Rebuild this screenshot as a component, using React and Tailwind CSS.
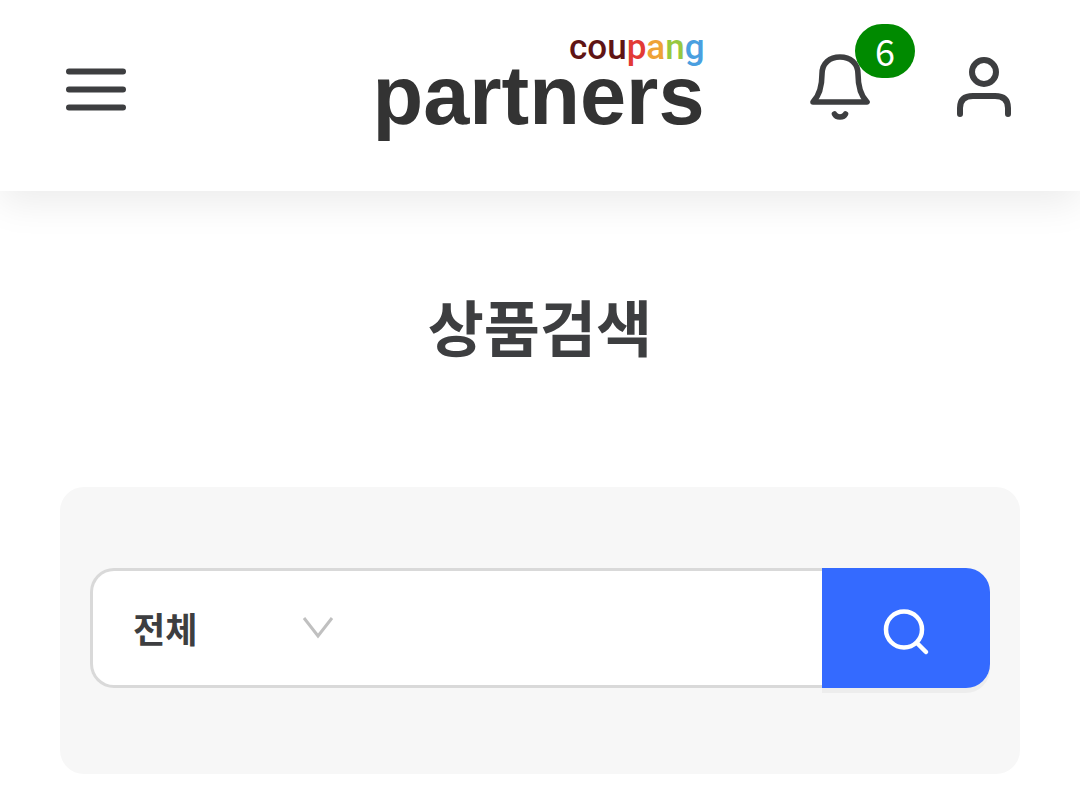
import React, { useState } from 'react';

const brand = [
  { text: 'cou', color: 'text-[#5f1414]' },
  { text: 'p', color: 'text-[#e23a36]' },
  { text: 'a', color: 'text-[#eea236]' },
  { text: 'n', color: 'text-[#97c83f]' },
  { text: 'g', color: 'text-[#4a9fe0]' },
];

function MenuIcon() {
  return (
    <svg className="w-[60px] h-11" viewBox="0 0 60 44" fill="none" stroke="currentColor" strokeWidth="6" strokeLinecap="round">
      <path d="M3 4.5h54M3 22.5h54M3 40.5h54" />
    </svg>
  );
}

function BellIcon() {
  return (
    <svg className="w-[60px] h-[68px]" viewBox="0 0 60 68" fill="none" stroke="currentColor" strokeWidth="5.6" strokeLinecap="round" strokeLinejoin="round">
      <path d="M3 49C9 43 12 35 12 21C12 10 20 4 30 4C40 4 48 10 48 21C48 35 51 43 57 49Z" />
      <path d="M24.5 61c1 2 3 3 5.500 3s4.500-1 5.500-3" />
    </svg>
  );
}

function UserIcon() {
  return (
    <svg className="w-[54px] h-[62px]" viewBox="0 0 54 62" fill="none" stroke="currentColor" strokeWidth="6" strokeLinecap="round">
      <circle cx="27" cy="16" r="12" />
      <path d="M3 58V52Q3 40 16 40H38Q51 40 51 52V58" />
    </svg>
  );
}

function SearchIcon() {
  return (
    <svg className="w-12 h-12" viewBox="0 0 48 48" fill="none" stroke="currentColor" strokeWidth="4.5" strokeLinecap="round">
      <circle cx="22" cy="21.5" r="18" />
      <path d="M35 35l9 9" />
    </svg>
  );
}

function Header() {
  return (
    <header className="grid grid-cols-[1fr_auto_1fr] items-start pl-[66px] pr-[69px] pb-[67px] bg-white shadow-[0_12px_36px_rgba(0,0,0,0.08)]">
      <button type="button" aria-label="메뉴" className="justify-self-start mt-[67px]">
        <MenuIcon />
      </button>

      <a href="#" className="flex flex-col items-end pt-7">
        <span className="font-['Roboto'] font-medium text-[35px] leading-10">
          {brand.map((part) => (
            <span key={part.text} className={part.color}>{part.text}</span>
          ))}
        </span>
        <span className="font-['Liberation_Sans'] font-bold text-[83px] leading-14 text-[#333333]">partners</span>
      </a>

      <div className="flex items-start gap-[87px] justify-self-end">
        <button type="button" aria-label="알림" className="relative mt-[53px]">
          <BellIcon />
          <span className="absolute -top-[29px] left-[45px] flex items-center justify-center w-[60px] h-[54px] pb-[2px] rounded-[27px] bg-[#008a00] text-white text-4xl">
            6
          </span>
        </button>
        <button type="button" aria-label="내 정보" className="mt-14">
          <UserIcon />
        </button>
      </div>
    </header>
  );
}

function SearchForm() {
  const [category, setCategory] = useState('all');
  const [keyword, setKeyword] = useState('');

  return (
    <form
      onSubmit={(e) => e.preventDefault()}
      className="flex h-[120px] rounded-3xl"
    >
      <div className="flex flex-1 min-w-0 rounded-l-3xl border-3 border-r-0 border-[#d9d9d9] bg-white">
        <div className="relative flex w-[250px] shrink-0">
          <select
            aria-label="카테고리"
            value={category}
            onChange={(e) => setCategory(e.target.value)}
            className="w-full appearance-none rounded-l-3xl bg-transparent pl-10 text-[35px] font-bold outline-none"
          >
            <option value="all">전체</option>
          </select>
          <svg className="pointer-events-none absolute right-[9px] top-11 w-8 h-6 text-[#c0c0c0]" viewBox="0 0 32 24" fill="none" stroke="currentColor" strokeWidth="3">
            <path d="M2 3L16 21L30 3" />
          </svg>
        </div>
        <input
          type="text"
          aria-label="검색어"
          value={keyword}
          onChange={(e) => setKeyword(e.target.value)}
          className="flex-1 min-w-0 bg-transparent px-4 text-[35px] outline-none"
        />
      </div>
      <button
        type="submit"
        aria-label="검색"
        className="flex items-center justify-center w-[168px] pt-2 rounded-r-3xl bg-[#346aff] text-white shadow-[0_5px_0_rgba(0,0,0,0.04)]"
      >
        <SearchIcon />
      </button>
    </form>
  );
}

export default function App() {
  return (
    <div className="min-h-screen bg-white text-[#3d3e40] font-['Noto_Sans_CJK_KR',sans-serif]">
      <Header />
      <main className="px-[60px] pt-24 pb-9">
        <h1 className="text-center text-[61px] leading-[78px] font-bold">상품검색</h1>
        <section className="mt-[122px] px-[30px] pt-[81px] pb-[86px] rounded-3xl bg-[#f7f7f7]">
          <SearchForm />
        </section>
      </main>
    </div>
  );
}
